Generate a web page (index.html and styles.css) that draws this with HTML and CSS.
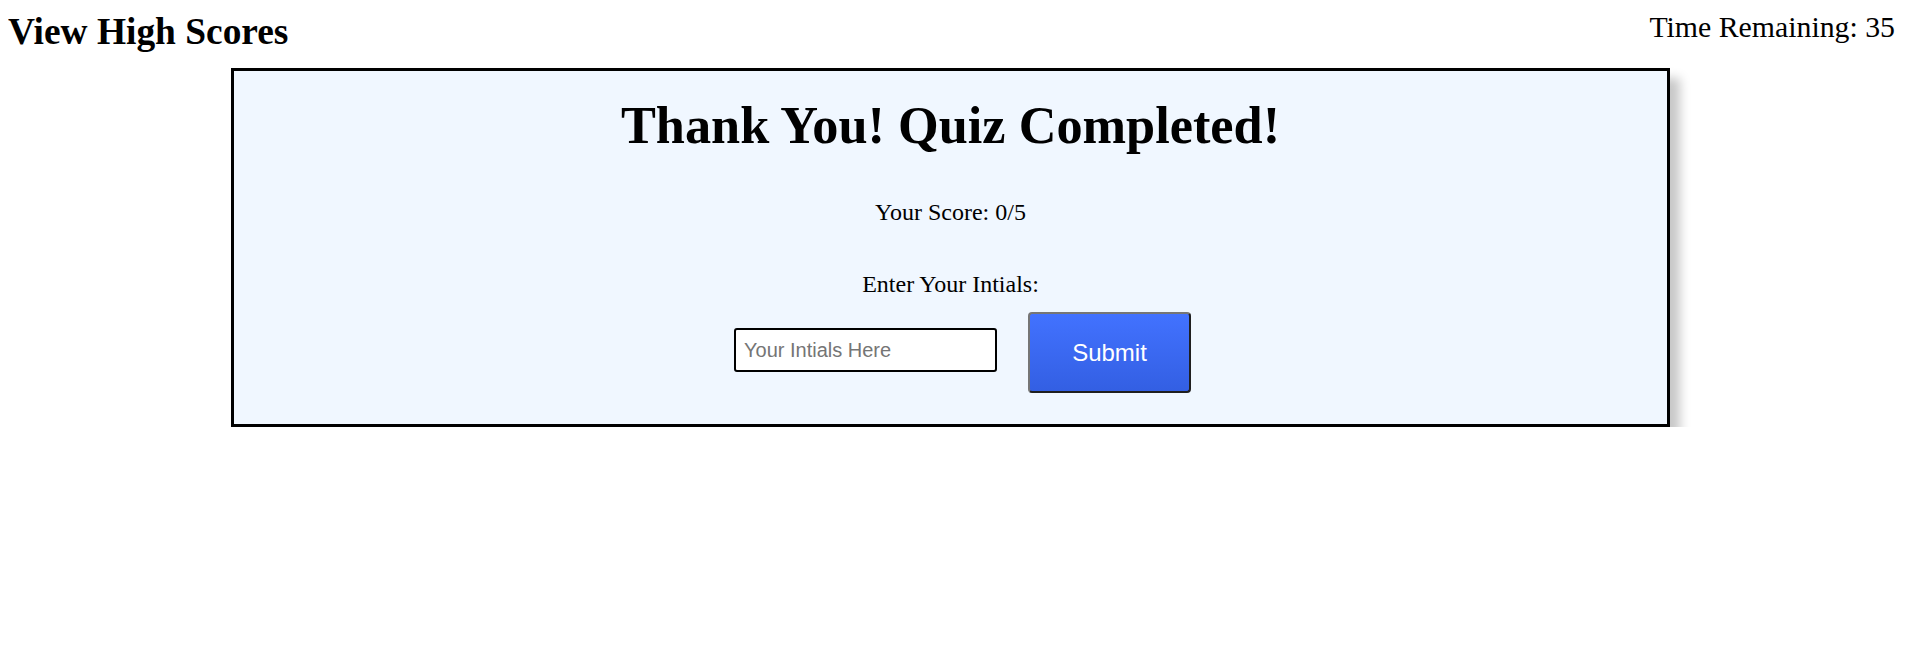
FILE: index.html
```html
<!DOCTYPE html>
<html lang="en">
<head>
<meta charset="utf-8">
<title>Quiz Completed</title>
<link rel="stylesheet" href="styles.css">
</head>
<body>
  <header class="topbar">
    <h1 class="high-scores">View High Scores</h1>
    <div class="timer">Time Remaining: 35</div>
  </header>
  <main class="card">
    <h2 class="card-title">Thank You! Quiz Completed!</h2>
    <p class="score">Your Score: 0/5</p>
    <p class="label">Enter Your Intials:</p>
    <form class="entry-row">
      <input class="initials" type="text" placeholder="Your Intials Here" autofocus>
      <button class="submit" type="button">Submit</button>
    </form>
  </main>
</body>
</html>
```

FILE: styles.css
```css
html, body {
  background: #ffffff;
}

body {
  margin: 8px;
  font-family: "Liberation Serif", "Times New Roman", serif;
  color: #000;
}

.topbar {
  display: flex;
  justify-content: space-between;
  align-items: flex-start;
  height: 60px;
}

.high-scores {
  margin: 2px 0 0 0;
  font-size: 37.4px;
  font-weight: bold;
  line-height: normal;
}

.timer {
  margin: 2px 2px 0 0;
  font-size: 29.8px;
  line-height: normal;
}

.card {
  box-sizing: border-box;
  width: 1439px;
  margin-left: 223px;
  border: 3px solid #000;
  background: #f0f7ff;
  box-shadow: 10px 10px 10px rgba(0, 0, 0, 0.22);
  padding: 24px 0 31px 0;
  display: flex;
  flex-direction: column;
  align-items: center;
  text-align: center;
}

.card-title {
  margin: 0;
  font-size: 52.3px;
  font-weight: bold;
  line-height: 60px;
}

.score {
  margin: 43px 0 0 0;
  font-size: 24px;
  line-height: 28px;
}

.label {
  margin: 44px 0 0 0;
  font-size: 24px;
  line-height: 28px;
}

.entry-row {
  margin: 14px 0 0 24px;
  display: flex;
  align-items: flex-start;
  gap: 31px;
}

.initials {
  box-sizing: border-box;
  width: 263px;
  height: 44px;
  margin-top: 16px;
  border: 2px solid #000;
  border-radius: 3px;
  padding: 0 8px;
  background: #fff;
  font-family: "Liberation Sans", Arial, sans-serif;
  font-size: 20px;
  color: #000;
  outline: none;
}

.initials::placeholder {
  color: #757575;
}

.submit {
  box-sizing: border-box;
  width: 163px;
  height: 81px;
  border: 2px solid;
  border-color: #767676 #1f1f1f #1f1f1f #767676;
  border-radius: 4px;
  background: linear-gradient(#4272ff, #335fe3);
  color: #fff;
  font-family: "Liberation Sans", Arial, sans-serif;
  font-size: 24px;
  padding: 0;
  cursor: pointer;
}
```
